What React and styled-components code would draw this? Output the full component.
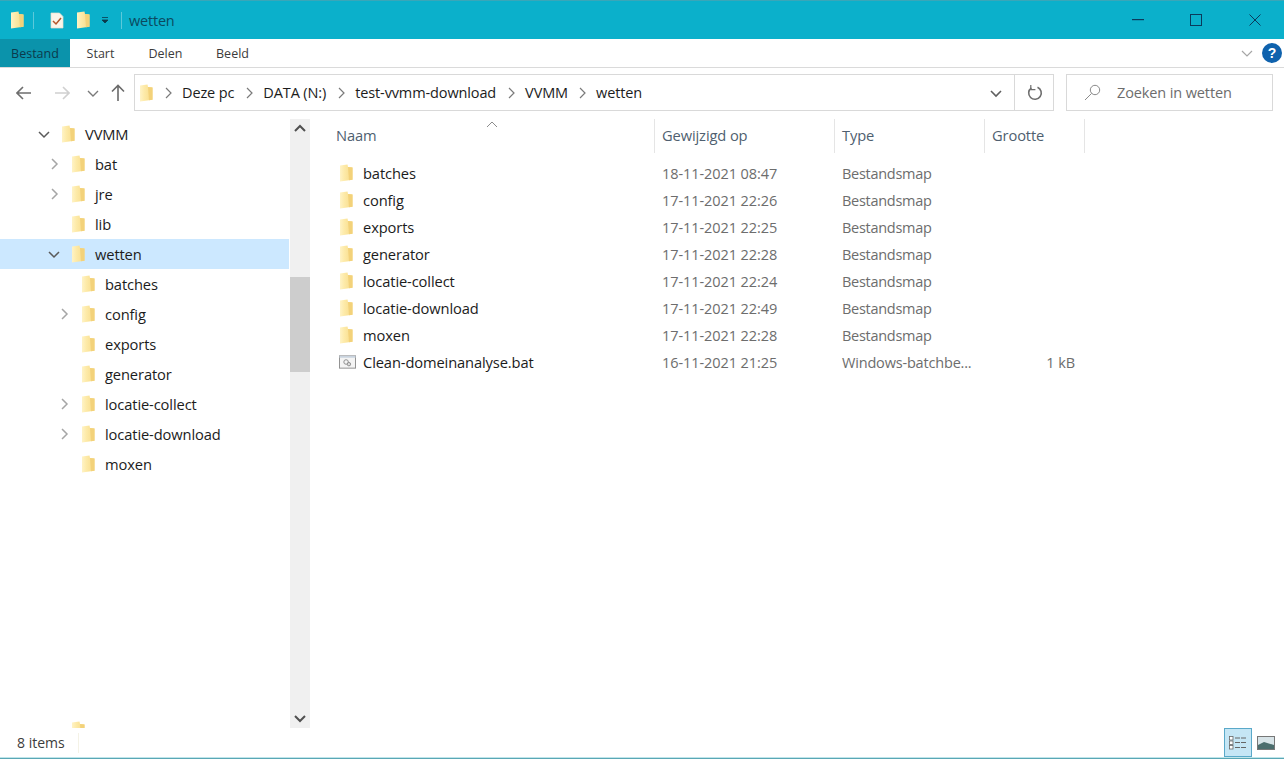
import React from "react";
import styled, { createGlobalStyle } from "styled-components";

const Global = createGlobalStyle`
  html, body { margin: 0; padding: 0; background: #fff; }
  body { font-family: "Open Sans", "Noto Sans", sans-serif; font-size: 14.7px; color: #1c1c1c; overflow: hidden; }
  * { box-sizing: border-box; }
`;

const Win = styled.div`
  width: 1284px; height: 759px; display: flex; flex-direction: column; background: #fff;
`;
const TitleBar = styled.div`
  height: 39px; flex: none; background: #0bb0cb; border-top: 1px solid #3aa6b8;
  display: flex; align-items: center; padding-left: 10px;
`;
const QuickIcons = styled.div`
  display: flex; align-items: center;
`;
const QuickGap = styled.span`
  width: ${p => p.$w}px; flex: none;
`;
const TitleSep = styled.div`
  width: 1px; height: 17px; background: #5cc9da; margin: ${p => p.$m};
`;
const TitleText = styled.div`
  font-size: 14.5px; color: #0b4a5f; letter-spacing: -0.2px;
`;
const WinButtons = styled.div`
  margin-left: auto; display: flex; align-items: center;
`;
const WinBtn = styled.div`
  width: 58.5px; display: flex; justify-content: center; align-items: center;
`;
const Ribbon = styled.div`
  height: 29px; flex: none; display: flex; align-items: stretch; border-bottom: 1px solid #dadada; padding-right: 2px;
`;
const Tab = styled.div`
  display: flex; align-items: center; justify-content: center; font-size: 12.5px; width: ${p => p.$w}px;
  background: ${p => (p.$active ? "#0b93ab" : "#fff")};
  color: ${p => (p.$active ? "#0b3a4c" : "#3c3c3c")};
`;
const RibbonRight = styled.div`
  margin-left: auto; display: flex; align-items: center; gap: 9px;
`;
const Help = styled.div`
  width: 20px; height: 20px; border-radius: 50%; background: #0f62ad; color: #fff; font-weight: 700; font-size: 14px;
  display: flex; align-items: center; justify-content: center; font-family: "Liberation Sans", sans-serif;
`;
const NavBar = styled.div`
  height: 50px; flex: none; display: flex; align-items: flex-start; padding-top: 6px;
`;
const NavButtons = styled.div`
  width: 134px; height: 37px; flex: none; display: flex; align-items: center; padding-left: 16px;
`;
const NavGap = styled.span`
  width: ${p => p.$w}px; flex: none;
`;
const AddressBox = styled.div`
  width: 920px; height: 37px; flex: none; border: 1px solid #d9d9d9; display: flex; align-items: center;
`;
const Crumbs = styled.div`
  flex: 1; display: flex; align-items: center; padding-left: 4px; height: 100%; font-size: 14.5px; white-space: nowrap; letter-spacing: -0.12px;
`;
const Crumb = styled.span`
  color: #1c1c1c;
`;
const CrumbSep = styled.span`
  display: flex; width: ${p => p.$w || 29}px; justify-content: center;
`;
const AddrBtn = styled.div`
  width: ${p => p.$w}px; height: 100%; display: flex; align-items: center; justify-content: center;
  border-left: ${p => (p.$line ? "1px solid #d9d9d9" : "none")};
  padding-left: ${p => p.$pl || 0}px;
`;
const SearchBox = styled.div`
  width: 207px; height: 37px; margin-left: 12px; border: 1px solid #d9d9d9; display: flex; align-items: center; padding-left: 17px; gap: 16px;
  color: #6d6d6d; font-size: 14.5px; letter-spacing: -0.12px;
`;
const Main = styled.div`
  flex: 1; min-height: 0; display: flex; padding-top: 1px;
`;
const Side = styled.div`
  width: 290px; flex: none; overflow: hidden; height: 609px;
`;
const TreeRow = styled.div`
  height: 30px; display: flex; align-items: center; padding-left: ${p => 37 + p.$level * 10}px;
  background: ${p => (p.$selected ? "#cce8ff" : "transparent")};
  margin-top: ${p => p.$mt || 0}px; width: 289px; letter-spacing: -0.12px;
`;
const Twisty = styled.span`
  width: 14px; height: 14px; display: flex; align-items: center; justify-content: center; flex: none; margin-right: 10px;
`;
const TreeLabel = styled.span`
  margin-left: 10px;
`;
const Scroll = styled.div`
  width: 20px; flex: none; height: 609px; background: #f0f0f0; display: flex; flex-direction: column;
`;
const ScrollBtn = styled.div`
  height: 20px; display: flex; align-items: center; justify-content: center; flex: none;
`;
const ScrollGap = styled.div`
  height: ${p => p.$h}px; flex: none;
`;
const Thumb = styled.div`
  height: 95px; flex: none; background: #cdcdcd;
`;
const Content = styled.div`
  flex: 1; min-width: 0; position: relative; padding-left: 18px;
`;
const cols = "327px 180px 150px 100px";
const Header = styled.div`
  display: grid; grid-template-columns: ${cols}; height: 34px; margin-bottom: 7px;
`;
const HeadCell = styled.div`
  display: flex; align-items: center; padding-left: 8px; color: #4f5f70; font-size: 14.7px; letter-spacing: -0.12px;
  border-right: 1px solid #e5e5e5; padding-bottom: 3px;
  &:not(:first-child) { padding-left: 7px; }
`;
const SortArrow = styled.span`
  position: absolute; left: 176px; top: 0px; display: flex;
`;
const Row = styled.div`
  display: grid; grid-template-columns: ${cols}; height: 27px; align-items: center; letter-spacing: -0.12px;
`;
const NameCell = styled.div`
  display: flex; align-items: center; padding: 0 0 2px 11px; gap: 7px;
`;
const FileIconBox = styled.span`
  width: 17px; display: flex; justify-content: ${p => (p.$center ? "center" : "flex-start")}; flex: none;
`;
const Meta = styled.div`
  padding-left: 7px; color: #6d6d6d; white-space: nowrap; overflow: hidden; font-size: 14.5px;
  letter-spacing: ${p => p.$ls || "-0.08px"};
`;
const Size = styled(Meta)`
  text-align: right; padding-right: 10px;
`;
const Status = styled.div`
  height: 29px; flex: none; display: flex; align-items: center; padding-left: 17px; font-size: 14px; color: #3c3c3c; position: relative;
`;
const StatusSep = styled.span`
  width: 1px; height: 20px; background: #f4f2e6; margin-left: 13px;
`;
const ViewBtns = styled.div`
  margin-left: auto; display: flex; align-items: center; height: 100%; padding-right: 4px;
`;
const ViewBtn = styled.div`
  width: 28px; height: 29px; display: flex; align-items: center; justify-content: center;
  background: ${p => (p.$on ? "#c5e6f5" : "transparent")};
  border: ${p => (p.$on ? "1px solid #5aa9c9" : "1px solid transparent")};
`;
const BottomLine = styled.div`
  height: 2px; flex: none; background: #5aa7b5; border-top: 1px solid #bfe5ea;
`;

const Folder = () => (
  <svg width="14" height="18" viewBox="0 0 14 18">
    <defs>
      <linearGradient id="fg" x1="0" x2="1" y1="0" y2="0">
        <stop offset="0" stopColor="#fff3c6" />
        <stop offset="0.35" stopColor="#fdeaa8" />
        <stop offset="1" stopColor="#f7da86" />
      </linearGradient>
    </defs>
    <path d="M1 1.5 L8.5 0.5 L9 3 L13.5 3.5 L13.5 15.8 L1 17.5 Z" fill="url(#fg)" />
    <path d="M9 3 L13.5 3.5 L13.5 15.8 L10 16.3 Z" fill="#f3d27a" />
  </svg>
);
const Chevron = ({ dir = "right", c = "#8c8c8c", s = 1.5 }) => {
  const d = { right: "M4 1 L9 6 L4 11", down: "M1 4 L6 9 L11 4", up: "M1 8 L6 3 L11 8" }[dir];
  return <svg width="12" height="12" viewBox="0 0 12 12"><path d={d} fill="none" stroke={c} strokeWidth={s} /></svg>;
};
const Arrow = ({ c, flip }) => (
  <svg width="16" height="14" viewBox="0 0 16 14" style={flip ? { transform: "scaleX(-1)" } : undefined}>
    <path d="M1 7 H15 M7 1 L1 7 L7 13" fill="none" stroke={c} strokeWidth="1.6" />
  </svg>
);
const UpArrow = () => (
  <svg width="14" height="17" viewBox="0 0 14 17">
    <path d="M7 17 V1.5 M1 7.5 L7 1.5 L13 7.5" fill="none" stroke="#6a6a6a" strokeWidth="1.6" />
  </svg>
);
const NoteIcon = () => (
  <svg width="14" height="17" viewBox="0 0 14 17">
    <path d="M1 1 H9.5 L13 4.5 V16 H1 Z" fill="#faf5ea" stroke="#e8e0cc" strokeWidth="0.7" />
    <path d="M3 9 L6 12 L11 6" fill="none" stroke="#b3562a" strokeWidth="1.5" />
  </svg>
);
const BatIcon = () => (
  <svg width="18" height="14" viewBox="0 0 18 14">
    <rect x="0.5" y="0.5" width="17" height="13" fill="#f4f4f4" stroke="#8d8d8d" />
    <rect x="0.5" y="0.5" width="17" height="2" fill="#c9d3de" stroke="none" />
    <circle cx="7.5" cy="7" r="2.4" fill="none" stroke="#8a8a8a" />
    <circle cx="10.5" cy="9.3" r="1.8" fill="#dcdcdc" stroke="#8a8a8a" />
  </svg>
);

const tree = [
  { n: "VVMM", l: 0, t: "down" },
  { n: "bat", l: 1, t: "right" },
  { n: "jre", l: 1, t: "right" },
  { n: "lib", l: 1 },
  { n: "wetten", l: 1, t: "down", sel: true },
  { n: "batches", l: 2 },
  { n: "config", l: 2, t: "right" },
  { n: "exports", l: 2 },
  { n: "generator", l: 2 },
  { n: "locatie-collect", l: 2, t: "right" },
  { n: "locatie-download", l: 2, t: "right" },
  { n: "moxen", l: 2 },
];
const files = [
  ["batches", "18-11-2021 08:47"],
  ["config", "17-11-2021 22:26"],
  ["exports", "17-11-2021 22:25"],
  ["generator", "17-11-2021 22:28"],
  ["locatie-collect", "17-11-2021 22:24"],
  ["locatie-download", "17-11-2021 22:49"],
  ["moxen", "17-11-2021 22:28"],
];
const crumbs = ["Deze pc", "DATA (N:)", "test-vvmm-download", "VVMM", "wetten"];

export default function App() {
  return (
    <Win>
      <Global />
      <TitleBar>
        <QuickIcons>
          <Folder />
          <TitleSep $m="0 16px 0 9px" />
          <NoteIcon />
          <QuickGap $w={12} />
          <Folder />
          <QuickGap $w={11} />
          <svg width="8" height="8" viewBox="0 0 8 8"><path d="M1 1.5 H7 M1 4 H7 L4 7 Z" fill="#0b3a4c" stroke="#0b3a4c" strokeWidth="0.8" /></svg>
          <TitleSep $m="0 7px 0 12px" />
        </QuickIcons>
        <TitleText>wetten</TitleText>
        <WinButtons>
          <WinBtn><svg width="12" height="2" viewBox="0 0 12 2"><rect width="12" height="1.2" fill="#0b3a5c" /></svg></WinBtn>
          <WinBtn><svg width="12" height="12" viewBox="0 0 12 12"><rect x="0.5" y="0.5" width="11" height="11" fill="none" stroke="#0b3a5c" /></svg></WinBtn>
          <WinBtn><svg width="12" height="12" viewBox="0 0 12 12"><path d="M0.5 0.5 L11.5 11.5 M11.5 0.5 L0.5 11.5" stroke="#0b3a5c" strokeWidth="1" /></svg></WinBtn>
        </WinButtons>
      </TitleBar>
      <Ribbon>
        <Tab $active $w={70}>Bestand</Tab>
        <Tab $w={61}>Start</Tab>
        <Tab $w={69}>Delen</Tab>
        <Tab $w={65}>Beeld</Tab>
        <RibbonRight>
          <Chevron dir="down" c="#a6a6a6" s={1.2} />
          <Help>?</Help>
        </RibbonRight>
      </Ribbon>
      <NavBar>
        <NavButtons>
          <Arrow c="#6e6e6e" />
          <NavGap $w={22} />
          <Arrow c="#d0d0d0" flip />
          <NavGap $w={17} />
          <Chevron dir="down" c="#7a7a7a" s={1.4} />
          <NavGap $w={12} />
          <UpArrow />
        </NavButtons>
        <AddressBox>
          <Crumbs>
            <Folder />
            <CrumbSep $w={29}><Chevron c="#7a7a7a" s={1.2} /></CrumbSep>
            {crumbs.map((c, i) => (
              <React.Fragment key={c}>
                <Crumb>{c}</Crumb>
                {i < crumbs.length - 1 && <CrumbSep $w={i === 3 ? 28 : 29}><Chevron c="#7a7a7a" s={1.2} /></CrumbSep>}
              </React.Fragment>
            ))}
          </Crumbs>
          <AddrBtn $w={40} $pl={3}><Chevron dir="down" c="#5f5f5f" s={1.6} /></AddrBtn>
          <AddrBtn $w={39} $line $pl={1}>
            <svg width="16" height="16" viewBox="0 0 16 16">
              <path d="M10.5 2.2 A6.3 6.3 0 1 1 4.4 2.8" fill="none" stroke="#6e6e6e" strokeWidth="1.6" />
              <path d="M3.8 0 V4.6 H8.4" fill="none" stroke="#6e6e6e" strokeWidth="1.2" />
            </svg>
          </AddrBtn>
        </AddressBox>
        <SearchBox>
          <svg width="17" height="17" viewBox="0 0 17 17">
            <circle cx="11" cy="6" r="4.7" fill="none" stroke="#8a8a8a" />
            <path d="M7.6 9.4 L1 16" stroke="#8a8a8a" strokeWidth="1" />
          </svg>
          Zoeken in wetten
        </SearchBox>
      </NavBar>
      <Main>
        <Side>
          {tree.map(t => (
            <TreeRow key={t.n} $level={t.l} $selected={t.sel}>
              <Twisty>{t.t && <Chevron dir={t.t} c={t.t === "down" ? "#5a5a5a" : "#a6a6a6"} s={1.5} />}</Twisty>
              <Folder />
              <TreeLabel>{t.n}</TreeLabel>
            </TreeRow>
          ))}
          <TreeRow $level={1} $mt={236}>
            <Twisty />
            <Folder />
          </TreeRow>
        </Side>
        <Scroll>
          <ScrollBtn><Chevron dir="up" c="#505050" s={2} /></ScrollBtn>
          <ScrollGap $h={138} />
          <Thumb />
          <ScrollGap $h={336} />
          <ScrollBtn><Chevron dir="down" c="#505050" s={2} /></ScrollBtn>
        </Scroll>
        <Content>
          <SortArrow><Chevron dir="up" c="#8c8c8c" s={1} /></SortArrow>
          <Header>
            <HeadCell>Naam</HeadCell>
            <HeadCell>Gewijzigd op</HeadCell>
            <HeadCell>Type</HeadCell>
            <HeadCell>Grootte</HeadCell>
          </Header>
          {files.map(([n, d]) => (
            <Row key={n}>
              <NameCell><FileIconBox><Folder /></FileIconBox>{n}</NameCell>
              <Meta>{d}</Meta>
              <Meta $ls="-0.28px">Bestandsmap</Meta>
              <Meta />
            </Row>
          ))}
          <Row>
            <NameCell><FileIconBox $center><BatIcon /></FileIconBox>Clean-domeinanalyse.bat</NameCell>
            <Meta>16-11-2021 21:25</Meta>
            <Meta $ls="-0.18px">Windows-batchbe...</Meta>
            <Size>1 kB</Size>
          </Row>
        </Content>
      </Main>
      <Status>
        8 items
        <StatusSep />
        <ViewBtns>
          <ViewBtn $on>
            <svg width="18" height="14" viewBox="0 0 18 14">
              <g fill="#fff" stroke="#666" strokeWidth="0.8"><rect x="0.5" y="0.5" width="3.5" height="3.5" /><rect x="0.5" y="5" width="3.5" height="3.5" /><rect x="0.5" y="9.5" width="3.5" height="3.5" /></g>
              <path d="M6 2 H17 M6 6.5 H17 M6 11.5 H17" stroke="#666" strokeWidth="1" strokeDasharray="5 1" />
            </svg>
          </ViewBtn>
          <ViewBtn>
            <svg width="18" height="14" viewBox="0 0 18 14">
              <rect x="0.5" y="0.5" width="17" height="13" fill="#d8e4e8" stroke="#777" />
              <path d="M1 9 L7 6 L17 9 V13 H1 Z" fill="#4b6d6d" />
            </svg>
          </ViewBtn>
        </ViewBtns>
      </Status>
      <BottomLine />
    </Win>
  );
}
